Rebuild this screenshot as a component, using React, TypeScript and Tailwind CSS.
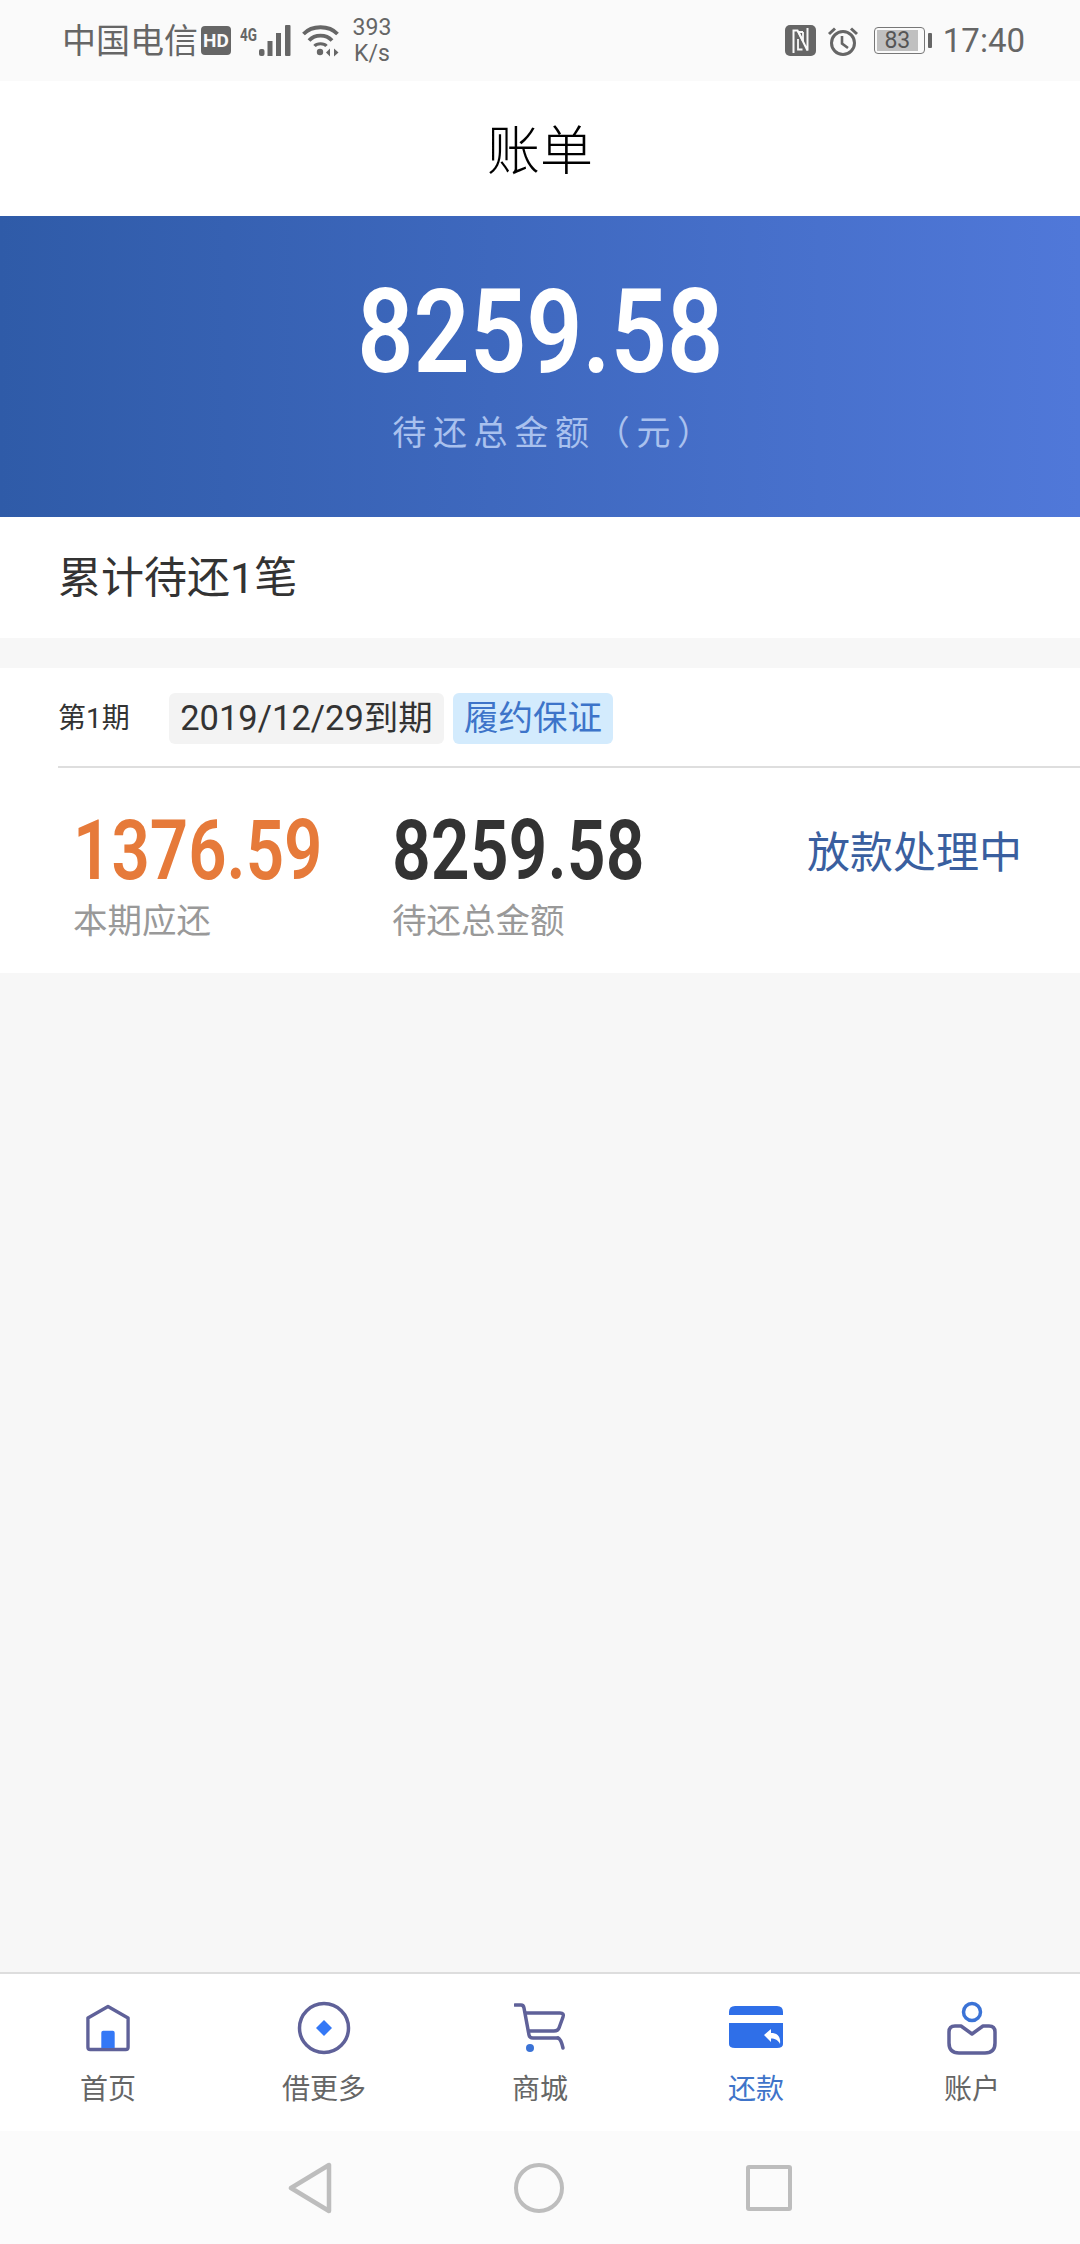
import React from "react";

const cjk = "font-['Roboto','Noto_Sans_CJK_SC',sans-serif]";

function Signal() {
  return (
    <svg width="52" height="34" viewBox="0 0 52 34" className="ml-[9px]">
      <text x="0" y="17" fontSize="18" fontWeight="700" fill="#666" fontFamily="Roboto" textLength="17" lengthAdjust="spacingAndGlyphs">4G</text>
      <rect x="19" y="25" width="5.500" height="7" rx="2" fill="#666" />
      <rect x="27.500" y="17" width="5" height="15" fill="#666" />
      <rect x="36" y="9" width="5" height="23" fill="#666" />
      <rect x="45" y="1" width="5.500" height="31" rx="1" fill="#666" />
    </svg>
  );
}

function Wifi() {
  return (
    <svg width="37" height="34" viewBox="0 0 37 34" className="ml-[10px]">
      <path d="M1.500 10C10 1 27 1 35.500 10" stroke="#666" strokeWidth="3.800" fill="none" />
      <path d="M7 16.500C13 10 24 10 30 16.500" stroke="#666" strokeWidth="3.800" fill="none" />
      <path d="M12.500 22C15 19 22 19 24.500 22" stroke="#666" strokeWidth="3.200" fill="none" />
      <circle cx="18" cy="28" r="3.200" fill="#666" />
      <path d="M28 24.500L24 28.500L28 32.500ZM32 24.500L36.500 28.500L32 32.500Z" fill="#666" />
    </svg>
  );
}

function Nfc() {
  return (
    <svg width="31" height="31" viewBox="0 0 31 31">
      <rect x="0" y="0" width="31" height="31" rx="5" fill="#666" />
      <path d="M8.500 28V5.500H12.500L22.500 25.500H22.500V3" stroke="#fafafa" strokeWidth="2" fill="none" />
      <path d="M13 14V24.500H17.500M18 7H13.500L18 16V7" stroke="#fafafa" strokeWidth="1.800" fill="none" />
    </svg>
  );
}

function Alarm() {
  return (
    <svg width="32" height="32" viewBox="0 0 32 32">
      <circle cx="16" cy="18" r="11.500" stroke="#666" strokeWidth="3" fill="none" />
      <path d="M15 11V18.500L21 23" stroke="#666" strokeWidth="2.600" fill="none" />
      <path d="M2 9L8 3.500M30 9L24 3.500" stroke="#666" strokeWidth="3" fill="none" />
    </svg>
  );
}

function Battery() {
  return (
    <div className="flex items-center">
      <div className="flex h-[27px] w-[51px] items-center rounded-[4px] border-[1.500px] border-[#777] p-[2px]">
        <div className={`flex h-full w-[41px] items-center justify-center bg-[#c0c0c0] text-[23px] leading-none text-[#555] ${cjk}`}>83</div>
      </div>
      <div className="ml-[3px] h-[15px] w-[4px] rounded-[1px] bg-[#666]" />
    </div>
  );
}

function Back() {
  return (
    <svg width="44" height="52" viewBox="0 0 44 52">
      <path d="M41 3V49L3 26Z" fill="none" stroke="#bdbdbd" strokeWidth="4.500" strokeLinejoin="round" />
    </svg>
  );
}

function HomeIcon() {
  return (
    <svg width="44" height="48" viewBox="0 0 46 50">
      <path d="M23 2.500L44 14.500V45Q44 47.500 41.500 47.500H4.500Q2 47.500 2 45V14.500Z" fill="none" stroke="#5f6199" strokeWidth="3.500" strokeLinejoin="round" />
      <path d="M16 30Q16 28 18 28H28Q30 28 30 30V46H16Z" fill="#3478f6" />
    </svg>
  );
}

function MoreIcon() {
  return (
    <svg width="54" height="54" viewBox="0 0 54 54">
      <circle cx="27" cy="27" r="24.500" fill="none" stroke="#5f6199" strokeWidth="3.500" />
      <path d="M27 19L35 27L27 35L19 27Z" fill="#3478f6" />
    </svg>
  );
}

function CartIcon() {
  return (
    <svg width="52" height="52" viewBox="0 0 52 52">
      <path d="M1 3H7Q9.500 3 10 6L15 33Q15.500 36 19 36H44" fill="none" stroke="#5f6199" strokeWidth="3.500" strokeLinecap="round" />
      <path d="M11 11H46Q50.500 11 49 15L45 26Q44 29 40 29H14" fill="none" stroke="#5f6199" strokeWidth="3.500" />
      <path d="M44 36Q47 37 49 46" fill="none" stroke="#5f6199" strokeWidth="3.500" strokeLinecap="round" />
      <circle cx="16" cy="46" r="4" fill="#3b73d6" />
    </svg>
  );
}

function CardIcon() {
  return (
    <svg width="54" height="44" viewBox="0 0 54 44">
      <path d="M6 0H48Q54 0 54 6V9H0V6Q0 0 6 0Z" fill="#2f6fe8" />
      <path d="M0 17H54V38Q54 42 48 42H6Q0 42 0 38Z" fill="#2f6fe8" />
      <path d="M35 29L42 23V27C48 27 52 30 51 38C49 34 46 32.500 42 32.500V36Z" fill="#fff" />
    </svg>
  );
}

function UserIcon() {
  return (
    <svg width="50" height="54" viewBox="0 0 50 54">
      <circle cx="25" cy="11" r="8.500" fill="none" stroke="#3b73d6" strokeWidth="3.500" />
      <path d="M14 25H8Q2 25 2 31V42Q2 52 12 52H38Q48 52 48 42V31Q48 25 42 25H36L25 33Z" fill="none" stroke="#5f6199" strokeWidth="3.500" strokeLinejoin="round" />
    </svg>
  );
}

const tabs = [
  { label: "首页", icon: <HomeIcon />, active: false },
  { label: "借更多", icon: <MoreIcon />, active: false },
  { label: "商城", icon: <CartIcon />, active: false },
  { label: "还款", icon: <CardIcon />, active: true },
  { label: "账户", icon: <UserIcon />, active: false },
];

export default function App() {
  return (
    <div className={`flex h-[2244px] w-[1080px] flex-col overflow-hidden bg-[#f7f7f7] ${cjk}`}>
      {/* status bar */}
      <div className="flex h-[81px] items-center justify-between bg-[#fafafa] pl-[62px] pr-[55px] text-[#666]">
        <div className="flex items-center">
          <span className="text-[34px] leading-none">中国电信</span>
          <span className="ml-[3px] flex h-[29px] w-[30px] items-center justify-center rounded-[4px] bg-[#666] text-[19px] font-bold leading-none text-[#fafafa]">HD</span>
          <Signal />
          <Wifi />
          <div className="ml-[13px] flex w-[40px] flex-col items-center text-[23px] leading-[26px]">
            <span>393</span>
            <span>K/s</span>
          </div>
        </div>
        <div className="flex items-center">
          <Nfc />
          <div className="ml-[11px]"><Alarm /></div>
          <div className="ml-[15px]"><Battery /></div>
          <span className="ml-[11px] text-[33px] leading-none">17:40</span>
        </div>
      </div>

      {/* title */}
      <div className="flex h-[135px] items-center justify-center bg-white pt-[8px] text-[53px] font-light leading-none text-black">账单</div>

      {/* banner */}
      <div className="flex h-[301px] flex-col items-center bg-linear-to-r from-[#2f5ba8] to-[#5078d9] pt-[56px] text-white">
        <div className="scale-x-[.85] text-[116px] font-semibold leading-[120px]">8259.58</div>
        <div className="ml-[30px] mt-[21px] text-[34px] leading-[40px] tracking-[6.700px] text-[#a9c1ee]">待还总金额（元）</div>
      </div>

      {/* count */}
      <div className="flex h-[121px] items-center bg-white pl-[58px] pt-[2px] text-[43px] leading-none text-[#333]">累计待还1笔</div>

      {/* bill card */}
      <div className="mt-[30px] h-[305px] bg-white pl-[58px]">
        <div className="flex h-[100px] items-center border-b-2 border-[#dedede] pt-[2px]">
          <span className="w-[111px] pt-[2px] text-[28px] leading-none text-[#333]">第1期</span>
          <span className="flex h-[51px] w-[275px] items-center justify-center rounded-[6px] bg-[#f3f3f3] text-[34.500px] leading-none text-[#333]">2019/12/29到期</span>
          <span className="ml-[9px] flex h-[51px] w-[160px] items-center justify-center rounded-[6px] bg-[#d3ebfd] text-[34.500px] leading-none text-[#3d74c9]">履约保证</span>
        </div>
        <div className="flex pl-[15px] pt-[38px]">
          <div className="w-[319px]">
            <div className="origin-left scale-x-[.8] text-[84px] font-semibold leading-[90px] text-[#e67a3a]">1376.59</div>
            <div className="mt-[5px] text-[34.500px] leading-[40px] text-[#999]">本期应还</div>
          </div>
          <div className="w-[415px]">
            <div className="origin-left scale-x-[.81] text-[84px] font-semibold leading-[90px] text-[#333]">8259.58</div>
            <div className="mt-[5px] text-[34.500px] leading-[40px] text-[#999]">待还总金额</div>
          </div>
          <div className="pt-[26px] text-[43px] leading-none text-[#3a5f9f]">放款处理中</div>
        </div>
      </div>

      <div className="flex-1" />

      {/* tab bar */}
      <div className="flex h-[159px] border-t-2 border-[#dddddd] bg-white">
        {tabs.map((t) => (
          <div key={t.label} className="flex w-[216px] flex-col items-center pt-[27px]">
            <div className="flex h-[54px] items-center justify-center">{t.icon}</div>
            <span className={`mt-[19px] text-[28px] leading-[32px] ${t.active ? "text-[#3f74c9]" : "text-[#666]"}`}>{t.label}</span>
          </div>
        ))}
      </div>

      {/* nav */}
      <div className="flex h-[113px] items-center justify-center gap-[182px] bg-[#fbfbfb]">
        <Back />
        <div className="h-[50px] w-[50px] rounded-full border-[4.500px] border-[#bdbdbd]" />
        <div className="h-[46px] w-[46px] rounded-[3px] border-[4.500px] border-[#bdbdbd]" />
      </div>
    </div>
  );
}
